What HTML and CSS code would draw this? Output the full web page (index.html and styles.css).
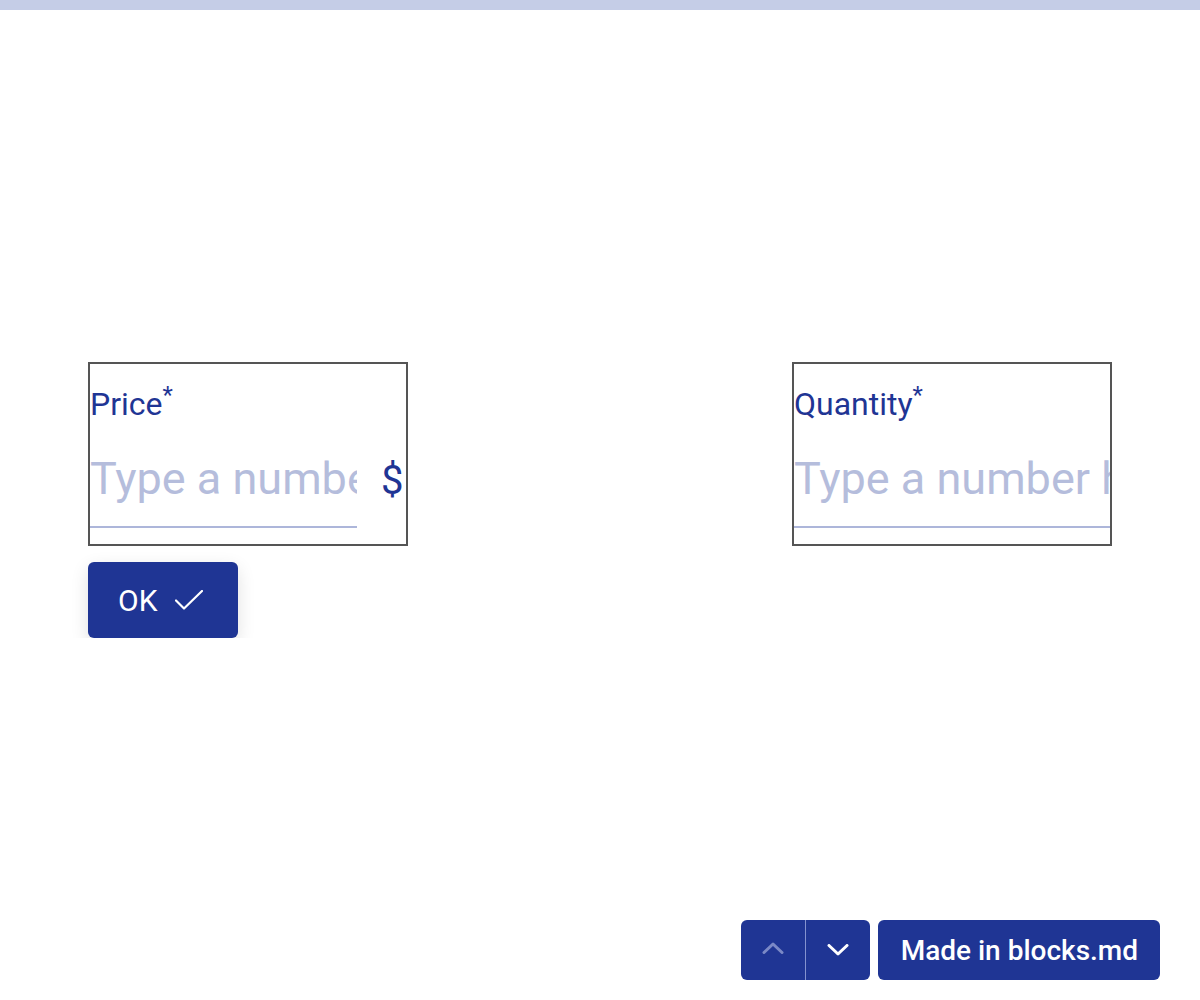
FILE: index.html
```html
<!DOCTYPE html>
<html lang="en">
<head>
<meta charset="utf-8">
<title>Form</title>
<link rel="stylesheet" href="styles.css">
</head>
<body>
<div class="topbar"></div>
<main class="page">
  <div class="fields">
    <div class="field">
      <label class="label">Price<span class="req">*</span></label>
      <div class="row">
        <input class="input input-price" type="text" placeholder="Type a number here">
        <span class="unit">$</span>
      </div>
    </div>
    <div class="field">
      <label class="label">Quantity<span class="req">*</span></label>
      <div class="row">
        <input class="input input-full" type="text" placeholder="Type a number here">
      </div>
    </div>
  </div>
  <button class="ok-btn" type="button">
    <span>OK</span>
    <svg class="check" width="28" height="20" viewBox="0 0 28 20"><path d="M1 10.5 L9 18.5 L27 1" fill="none" stroke="#fff" stroke-width="2.2" stroke-linecap="round" stroke-linejoin="round"/></svg>
  </button>
</main>
<div class="toolbar">
  <div class="nav-group">
    <button class="nav-btn nav-up" type="button">
      <svg width="22" height="12" viewBox="0 0 22 12"><path d="M2 10.5 L11 2 L20 10.5" fill="none" stroke="currentColor" stroke-width="3" stroke-linecap="round" stroke-linejoin="round"/></svg>
    </button>
    <span class="nav-divider"></span>
    <button class="nav-btn nav-down" type="button">
      <svg width="22" height="12" viewBox="0 0 22 12"><path d="M2 1.5 L11 10 L20 1.5" fill="none" stroke="currentColor" stroke-width="3" stroke-linecap="round" stroke-linejoin="round"/></svg>
    </button>
  </div>
  <a class="made-btn">Made in blocks.md</a>
</div>
</body>
</html>
```
FILE: styles.css
```css
html, body {
  margin: 0;
  padding: 0;
  background: #ffffff;
  font-family: Roboto, "Liberation Sans", sans-serif;
}

.topbar {
  height: 10px;
  background: #c5cde7;
}

.page {
  max-width: 1024px;
  margin: 0 auto;
  padding-top: 352px;
}

.fields {
  display: flex;
  justify-content: space-between;
}

.field {
  box-sizing: border-box;
  width: 320px;
  height: 184px;
  border: 2px solid #555555;
  padding-top: 21px;
  overflow: hidden;
}

.label {
  display: block;
  font-size: 32px;
  line-height: 38px;
  color: #1f3594;
  height: 38px;
}

.req {
  font-size: 24px;
  vertical-align: 12px;
  line-height: 0;
}

.row {
  display: flex;
  align-items: flex-start;
  margin-top: 26px;
}

.input {
  box-sizing: border-box;
  font-family: Roboto, "Liberation Sans", sans-serif;
  font-size: 45px;
  line-height: 53px;
  height: 79px;
  padding: 3px 0 21px 0;
  margin: 0;
  border: none;
  border-bottom: 2px solid #adb6da;
  outline: none;
  color: #1f3594;
  background: transparent;
}

.input::placeholder {
  color: #b5bddc;
  opacity: 1;
}

.input-price {
  width: 267px;
  flex: none;
}

.input-full {
  width: 100%;
}

.unit {
  flex: none;
  margin-left: 24px;
  font-size: 40px;
  line-height: 47px;
  padding-top: 8px;
  color: #1f3594;
}

.ok-btn {
  display: flex;
  align-items: center;
  gap: 18px;
  margin-top: 16px;
  height: 76px;
  width: 150px;
  box-sizing: border-box;
  padding: 0 30px;
  border: none;
  border-radius: 6px;
  background: #1f3594;
  color: #ffffff;
  font-family: Roboto, "Liberation Sans", sans-serif;
  font-size: 30px;
  font-weight: 400;
  box-shadow: 0 6px 18px rgba(0, 0, 0, 0.12);
}

.check {
  display: block;
  flex: none;
}

.toolbar {
  position: fixed;
  right: 40px;
  bottom: 20px;
  display: flex;
  gap: 8px;
}

.nav-group {
  display: flex;
  height: 60px;
  background: #1f3594;
  border-radius: 6px;
  overflow: hidden;
}

.nav-btn {
  width: 64px;
  height: 60px;
  border: none;
  background: transparent;
  display: flex;
  align-items: center;
  justify-content: center;
  padding: 0;
}

.nav-up {
  color: #7b89c6;
}

.nav-up svg {
  margin-top: -4px;
}

.nav-down {
  color: #ffffff;
}

.nav-divider {
  width: 1px;
  background: #8492cf;
}

.made-btn {
  display: flex;
  align-items: center;
  height: 60px;
  box-sizing: border-box;
  padding: 0 22px 0 23px;
  background: #1f3594;
  color: #ffffff;
  border-radius: 6px;
  font-size: 28px;
  font-weight: 500;
}
```
